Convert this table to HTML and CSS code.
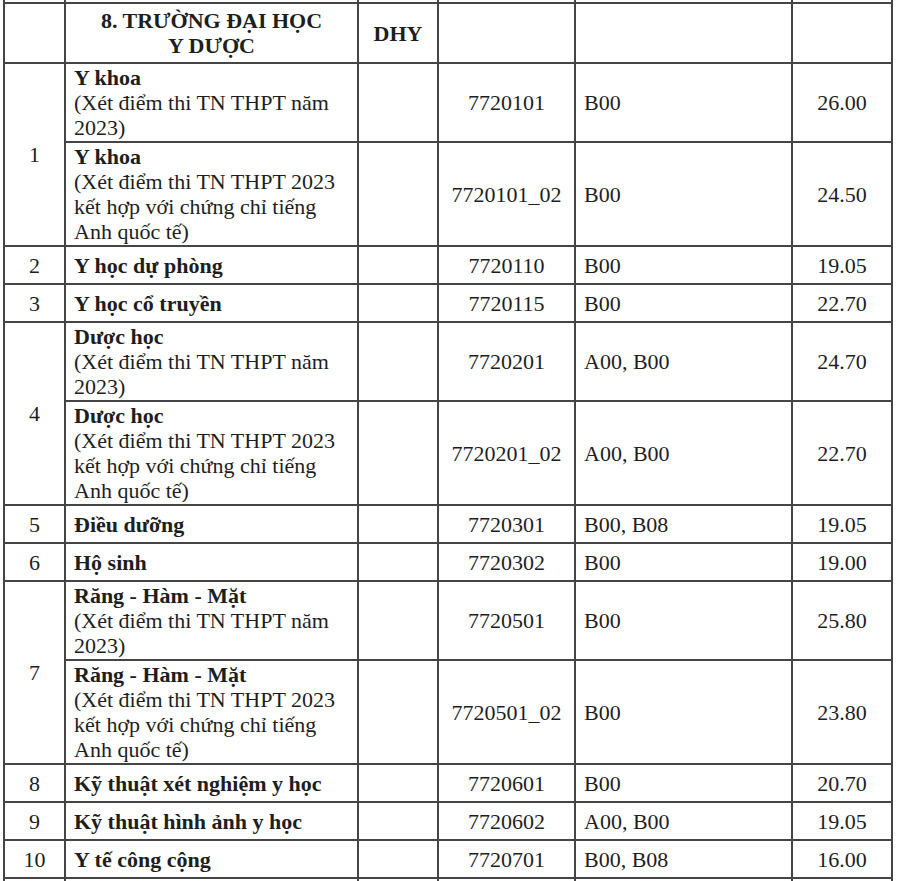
FILE: index.html
```html
<!DOCTYPE html>
<html lang="vi">
<head>
<meta charset="utf-8">
<link rel="stylesheet" href="styles.css">
</head>
<body>
<table class="grid">
  <colgroup>
    <col class="c-stt"><col class="c-name"><col class="c-ma"><col class="c-code"><col class="c-combo"><col class="c-score">
  </colgroup>
  <tr class="stub stub-top"><td></td><td></td><td></td><td></td><td></td><td></td></tr>
  <tr class="head">
    <td></td>
    <td class="title">8. TRƯỜNG ĐẠI HỌC<br>Y DƯỢC</td>
    <td class="ma">DHY</td>
    <td></td><td></td><td></td>
  </tr>
  <tr>
    <td class="stt" rowspan="2">1</td>
    <td class="name"><b>Y khoa</b><br>(Xét điểm thi TN THPT năm 2023)</td>
    <td></td><td class="code">7720101</td><td class="combo">B00</td><td class="score">26.00</td>
  </tr>
  <tr>
    <td class="name"><b>Y khoa</b><br>(Xét điểm thi TN THPT 2023 kết hợp với chứng chỉ tiếng Anh quốc tế)</td>
    <td></td><td class="code">7720101_02</td><td class="combo">B00</td><td class="score">24.50</td>
  </tr>
  <tr class="single">
    <td class="stt">2</td><td class="name"><b>Y học dự phòng</b></td>
    <td></td><td class="code">7720110</td><td class="combo">B00</td><td class="score">19.05</td>
  </tr>
  <tr class="single">
    <td class="stt">3</td><td class="name"><b>Y học cổ truyền</b></td>
    <td></td><td class="code">7720115</td><td class="combo">B00</td><td class="score">22.70</td>
  </tr>
  <tr>
    <td class="stt" rowspan="2">4</td>
    <td class="name"><b>Dược học</b><br>(Xét điểm thi TN THPT năm 2023)</td>
    <td></td><td class="code">7720201</td><td class="combo">A00, B00</td><td class="score">24.70</td>
  </tr>
  <tr>
    <td class="name"><b>Dược học</b><br>(Xét điểm thi TN THPT 2023 kết hợp với chứng chỉ tiếng Anh quốc tế)</td>
    <td></td><td class="code">7720201_02</td><td class="combo">A00, B00</td><td class="score">22.70</td>
  </tr>
  <tr class="single">
    <td class="stt">5</td><td class="name"><b>Điều dưỡng</b></td>
    <td></td><td class="code">7720301</td><td class="combo">B00, B08</td><td class="score">19.05</td>
  </tr>
  <tr class="single">
    <td class="stt">6</td><td class="name"><b>Hộ sinh</b></td>
    <td></td><td class="code">7720302</td><td class="combo">B00</td><td class="score">19.00</td>
  </tr>
  <tr>
    <td class="stt" rowspan="2">7</td>
    <td class="name"><b>Răng - Hàm - Mặt</b><br>(Xét điểm thi TN THPT năm 2023)</td>
    <td></td><td class="code">7720501</td><td class="combo">B00</td><td class="score">25.80</td>
  </tr>
  <tr>
    <td class="name"><b>Răng - Hàm - Mặt</b><br>(Xét điểm thi TN THPT 2023 kết hợp với chứng chỉ tiếng Anh quốc tế)</td>
    <td></td><td class="code">7720501_02</td><td class="combo">B00</td><td class="score">23.80</td>
  </tr>
  <tr class="single">
    <td class="stt">8</td><td class="name"><b>Kỹ thuật xét nghiệm y học</b></td>
    <td></td><td class="code">7720601</td><td class="combo">B00</td><td class="score">20.70</td>
  </tr>
  <tr class="single">
    <td class="stt">9</td><td class="name"><b>Kỹ thuật hình ảnh y học</b></td>
    <td></td><td class="code">7720602</td><td class="combo">A00, B00</td><td class="score">19.05</td>
  </tr>
  <tr class="single">
    <td class="stt">10</td><td class="name"><b>Y tế công cộng</b></td>
    <td></td><td class="code">7720701</td><td class="combo">B00, B08</td><td class="score">16.00</td>
  </tr>
  <tr class="single"><td></td><td></td><td></td><td></td><td></td><td></td></tr>
</table>
</body>
</html>
```

FILE: styles.css
```css
html, body {
  margin: 0;
  padding: 0;
  background: #ffffff;
}

body {
  font-family: "Liberation Serif", "Times New Roman", serif;
  font-size: 22px;
  line-height: 25px;
  color: #1e1e1e;
  overflow: hidden;
}

.grid {
  border-collapse: collapse;
  table-layout: fixed;
  width: 890px;
  margin-left: 3px;
}

.c-stt { width: 61px; }
.c-name { width: 293px; }
.c-ma { width: 80px; }
.c-code { width: 137px; }
.c-combo { width: 217px; }
.c-score { width: 100px; }

.grid td {
  border: 2px solid #454545;
  padding: 1px 8px;
  vertical-align: middle;
}

.stub-top td {
  border-top: none;
  height: 2px;
  padding: 0;
}

.head td {
  height: 56px;
}

.title {
  text-align: center;
  font-weight: bold;
}

.ma {
  text-align: center;
  font-weight: bold;
}

.single td {
  height: 34px;
}

.stt {
  text-align: center;
}

.name {
  text-align: left;
}

.code {
  text-align: center;
  padding-left: 2px;
  padding-right: 2px;
}

.combo {
  text-align: left;
}

.score {
  text-align: center;
}
```
